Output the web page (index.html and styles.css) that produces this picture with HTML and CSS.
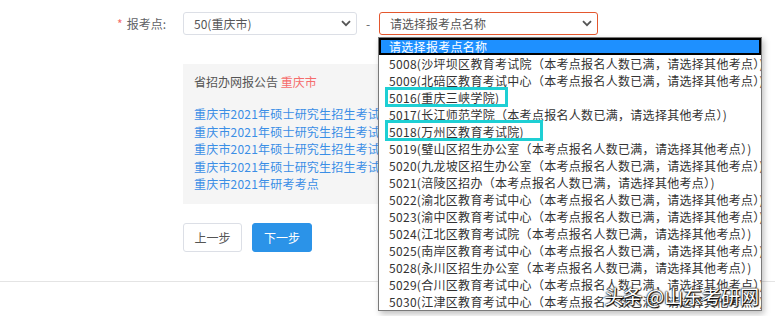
FILE: index.html
```html
<!DOCTYPE html>
<html lang="zh-CN">
<head>
    <meta charset="UTF-8">
    <meta name="viewport" content="width=device-width, initial-scale=1.0">
    <title>报考点选择</title>
    <link rel="stylesheet" href="styles.css">
</head>
<body>

    <div class="form-row">
        <label class="form-label"><span class="required">*</span>报考点:</label>
        <div class="select select-province">
            <span>50(重庆市)</span>
            <svg class="arrow" width="10" height="7" viewBox="0 0 10 7"><path d="M1 1.2 L5 5.2 L9 1.2" fill="none" stroke="#555" stroke-width="1.8"/></svg>
        </div>
        <span class="dash">-</span>
        <div class="select select-site">
            <span>请选择报考点名称</span>
            <svg class="arrow" width="10" height="7" viewBox="0 0 10 7"><path d="M1 1.2 L5 5.2 L9 1.2" fill="none" stroke="#555" stroke-width="1.8"/></svg>
        </div>
    </div>

    <div class="notice">
        <p class="notice-title">省招办网报公告 <span class="city">重庆市</span></p>
        <ul class="notice-list">
            <li><a href="#">重庆市2021年硕士研究生招生考试报名公告</a></li>
            <li><a href="#">重庆市2021年硕士研究生招生考试网上确认公告</a></li>
            <li><a href="#">重庆市2021年硕士研究生招生考试网报须知</a></li>
            <li><a href="#">重庆市2021年硕士研究生招生考试报考点公告</a></li>
            <li><a href="#">重庆市2021年研考考点</a></li>
        </ul>
    </div>

    <div class="actions">
        <button class="btn">上一步</button>
        <button class="btn btn-primary">下一步</button>
    </div>

    <hr class="divider">

    <ul class="dropdown" id="siteList"></ul>

    <!-- annotation boxes -->
    <div class="mark mark-1"></div>
    <div class="mark mark-2"></div>

    <div class="watermark">头条 @山东考研网</div>

    <script>
        const full = "（本考点报名人数已满，请选择其他考点）)";
        const sites = [
            ["5008", "沙坪坝区教育考试院", true],
            ["5009", "北碚区教育考试中心", true],
            ["5016", "重庆三峡学院", false],
            ["5017", "长江师范学院", true],
            ["5018", "万州区教育考试院", false],
            ["5019", "璧山区招生办公室", true],
            ["5020", "九龙坡区招生办公室", true],
            ["5021", "涪陵区招办", true],
            ["5022", "渝北区教育考试中心", true],
            ["5023", "渝中区教育考试中心", true],
            ["5024", "江北区教育考试院", true],
            ["5025", "南岸区教育考试中心", true],
            ["5028", "永川区招生办公室", true],
            ["5029", "合川区教育考试中心", true],
            ["5030", "江津区教育考试中心", true]
        ];

        const list = document.getElementById("siteList");
        const first = document.createElement("li");
        first.className = "active";
        first.textContent = "请选择报考点名称";
        list.appendChild(first);

        sites.forEach(s => {
            const li = document.createElement("li");
            li.textContent = s[0] + "(" + s[1] + (s[2] ? full : ")");
            list.appendChild(li);
        });
    </script>

</body>
</html>
```

FILE: styles.css
```css
body {
    font-family: "Noto Sans CJK SC", "Liberation Sans", sans-serif;
    font-size: 12px;
    color: #606266;
    background: #fff;
    margin: 0;
    padding: 0;
}

.form-row {
    display: flex;
    align-items: center;
    padding-top: 12px;
    height: 23px;
}

.form-label {
    width: 166px;
    padding-right: 17px;
    text-align: right;
    font-size: 12px;
}

.required {
    color: #f56c6c;
    margin-right: 4px;
}

.select {
    box-sizing: border-box;
    height: 23px;
    border: 1px solid #dcdfe6;
    border-radius: 3px;
    display: flex;
    align-items: center;
    justify-content: space-between;
    padding: 0 5px 0 10px;
    color: #555;
}

.select-province {
    width: 174px;
}

.select-site {
    width: 219px;
    border-color: #e4572e;
}

.dash {
    width: 22px;
    text-align: center;
}

.notice {
    margin: 29px 0 0 183px;
    width: 400px;
    height: 140px;
    box-sizing: border-box;
    background: #f5f5f5;
    padding: 9px 11px;
}

.notice-title {
    margin: 0 0 15px;
    line-height: 17px;
    color: #555;
}

.city {
    color: #f56c6c;
}

.notice-list {
    list-style: none;
    margin: 0;
    padding: 0;
}

.notice-list li {
    line-height: 17.5px;
    white-space: nowrap;
    letter-spacing: 0.2px;
}

.notice-list a {
    color: #3a8ee6;
    text-decoration: none;
}

.actions {
    display: flex;
    gap: 10px;
    margin: 19px 0 0 183px;
}

.btn {
    box-sizing: border-box;
    width: 59px;
    height: 29px;
    border: 1px solid #dcdfe6;
    border-radius: 3px;
    background: #fff;
    color: #555;
    font-family: inherit;
    font-size: 12px;
    padding: 0;
}

.btn-primary {
    width: 60px;
    background: #2b93e8;
    border-color: #2b93e8;
    color: #fff;
}

.divider {
    border: 0;
    border-top: 1px solid #e4e4e4;
    margin: 29px 0 0;
}

.dropdown {
    position: absolute;
    left: 378px;
    top: 37px;
    width: 384px;
    box-sizing: border-box;
    margin: 0;
    padding: 0;
    list-style: none;
    background: #fff;
    border: 1px solid #7a7a7a;
    box-shadow: 2px 3px 6px rgba(0, 0, 0, 0.25);
    color: #333;
}

.dropdown li {
    height: 17px;
    line-height: 17px;
    padding-left: 10px;
    white-space: nowrap;
    overflow: hidden;
    letter-spacing: 0.3px;
}

.dropdown li.active {
    background: #1e90ff;
    color: #fff;
    outline: 2px solid #000;
    outline-offset: -2px;
}

.mark {
    position: absolute;
    border: 3px solid #1ecfd4;
    box-sizing: border-box;
}

.mark-1 {
    left: 385px;
    top: 87px;
    width: 123px;
    height: 20px;
}

.mark-2 {
    left: 385px;
    top: 120px;
    width: 158px;
    height: 21px;
}

.watermark {
    position: absolute;
    left: 604px;
    top: 283px;
    font-size: 19.5px;
    line-height: 26px;
    color: #fff;
    letter-spacing: -0.5px;
    text-shadow: 0 0 2px #000, 0 0 1px #000, 1px 1px 1px #000;
}
```
